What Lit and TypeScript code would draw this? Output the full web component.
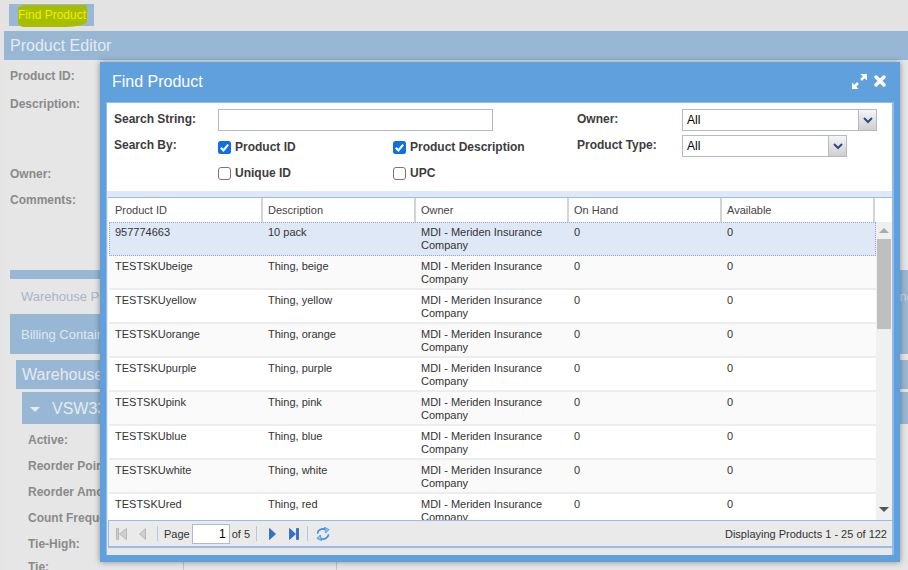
import { LitElement, html, css, svg } from "lit";
import { customElement } from "lit/decorators.js";

const rows = [
  ["957774663", "10 pack"],
  ["TESTSKUbeige", "Thing, beige"],
  ["TESTSKUyellow", "Thing, yellow"],
  ["TESTSKUorange", "Thing, orange"],
  ["TESTSKUpurple", "Thing, purple"],
  ["TESTSKUpink", "Thing, pink"],
  ["TESTSKUblue", "Thing, blue"],
  ["TESTSKUwhite", "Thing, white"],
  ["TESTSKUred", "Thing, red"],
];

const check = svg`<svg width="13" height="13" viewBox="0 0 13 13"><rect width="13" height="13" rx="2.5" fill="#0f6fe8"/><path d="M2.8 6.8 L5.4 9.4 L10.2 3.6" fill="none" stroke="#fff" stroke-width="2.2"/></svg>`;
const uncheck = svg`<svg width="13" height="13" viewBox="0 0 13 13"><rect x=".5" y=".5" width="12" height="12" rx="2.5" fill="#fff" stroke="#777"/></svg>`;
const arrow = svg`<svg width="10" height="7" viewBox="0 0 10 7"><path d="M1 1 L5 5 L9 1" fill="none" stroke="#2a4b86" stroke-width="2"/></svg>`;

@customElement("app-root")
export class AppRoot extends LitElement {
  static styles = css`
    :host { display: block; width: 908px; height: 570px; position: relative; overflow: hidden; background: #e4e4e4; font-family: "Liberation Sans", Arial, sans-serif; }
    .topbar { height: 31px; box-sizing: border-box; padding: 4px 0 0 9px; background: #e3e3e3; }
    .findbtn { position: relative; width: 85px; height: 22px; background: #9ab8d4; font-size: 12px; line-height: 22px; color: #eef000; box-sizing: border-box; padding-left: 9px; }
    .findbtn .hl { position: absolute; left: 9px; top: 1px; width: 69px; height: 22px; background: #a6bd00; border-radius: 8px 3px 22px 7px / 4px 2px 6px 4px; }
    .findbtn span { position: relative; }
    .page { margin-left: 4px; height: 539px; background: #e6e6e6; overflow: hidden; }
    .ph { height: 29px; background: #97b7d5; color: #e6ebf0; font-size: 16px; line-height: 29px; padding-left: 6px; }
    .form { height: 210px; padding: 9px 0 0 6px; box-sizing: border-box; display: flex; flex-direction: column; }
    .lab { font-size: 12px; font-weight: bold; color: #8a8a8a; line-height: 14px; }
    .form .l2 { margin-top: 14px; }
    .form .l3 { margin-top: 56px; }
    .form .l4 { margin-top: 12px; }
    .sec { margin-left: 6px; }
    .strip { height: 9px; background: #97b7d5; }
    .tabline { height: 35px; display: flex; line-height: 35px; font-size: 13px; color: #a9b5cc; padding-left: 11px; }
    .tabright { margin-left: auto; margin-right: -6px; width: 306px; background: #97b7d5; color: #c9d5e2; text-align: right; white-space: nowrap; }
    .billing { height: 40px; background: #97b7d5; color: #dfe7ef; font-size: 13px; line-height: 42px; padding-left: 11px; }
    .wh { margin: 6px 0 0 6px; height: 29px; background: #97b7d5; color: #e6ebf0; font-size: 16px; line-height: 29px; padding-left: 6px; }
    .vsw { margin: 3px 0 0 12px; height: 32px; background: #97b7d5; color: #e6ebf0; font-size: 16px; line-height: 33px; padding-left: 30px; position: relative; }
    .vsw::before { content: ""; position: absolute; left: 8px; top: 15px; border: 5px solid transparent; border-top: 5px solid #e6ebf0; border-bottom: 0; }
    .fields { margin-left: 18px; padding-top: 9px; display: flex; flex-direction: column; gap: 12px; }
    .fields .tie { margin-top: -3px; }
    .lines { position: absolute; left: 183px; top: 555px; width: 154px; height: 15px; box-sizing: border-box; border-left: 1px solid #c4c4c4; border-right: 1px solid #c4c4c4; }

    .modal { position: absolute; left: 100px; top: 62px; width: 800px; height: 500px; box-sizing: border-box; background: #5fa0dd; padding: 0 6px 7px; display: flex; flex-direction: column; box-shadow: 0 0 6px rgba(0,0,0,.4); }
    .mh { height: 40px; flex: none; display: flex; align-items: center; justify-content: space-between; padding: 0 0 0 6px; color: #fff; font-size: 16px; }
    .mh .icons { display: flex; align-items: center; gap: 7px; padding-right: 8px; margin-bottom: 2px; }
    .mb { flex: 1; min-height: 0; background: #e8e8e8; display: flex; flex-direction: column; border: 1px solid #8fbcec; border-width: 1px 2px 0 1px; }
    .search { height: 88px; flex: none; box-sizing: border-box; background: #fff; padding: 6px 0 0 7px; display: grid; grid-template-columns: 104px 175px 184px 105px 1fr; grid-template-rows: 22px 22px 22px; row-gap: 4px; align-items: start; }
    .search .lab { color: #3d3d3d; margin-top: 3px; }
    .field { position: relative; box-sizing: border-box; background: #fff; border: 1px solid #b5b8c8; height: 22px; font-size: 12px; line-height: 21px; padding-left: 4px; color: #000; }
    .wide { grid-column: 2 / span 2; width: 275px; }
    .f195 { width: 195px; }
    .f165 { width: 165px; }
    .trig { position: absolute; right: 0; top: 0; bottom: 0; width: 17px; background: linear-gradient(#f5f5f5, #cfcfcf); border-left: 1px solid #b5b8c8; display: flex; align-items: center; justify-content: center; }
    .cb { display: flex; align-items: center; gap: 4px; font-size: 12px; font-weight: bold; color: #3d3d3d; line-height: 14px; margin-top: 5px; }
    .cb svg { display: block; margin-top: 1px; }
    .r3 { grid-column: 2; }
    .gap { height: 6px; flex: none; background: #dfe8f6; }
    .grid { flex: 1; min-height: 0; margin-left: 1px; border: 1px solid #99bce8; border-width: 1px 0 0 0; padding-left: 1px; background: #fff; display: flex; flex-direction: column; overflow: hidden; }
    .ghead { height: 24px; flex: none; display: flex; background: #fff; }
    .ghead div { box-sizing: border-box; border-right: 2px solid #d4d4d4; font-size: 11px; line-height: 25px; padding-left: 5px; color: #444; }
    .ghead div:first-child { width: 154px; padding-left: 6px; }
    .cell { width: 153px; flex: none; }
    .gbody { flex: 1; min-height: 0; display: flex; }
    .grows { width: 767px; flex: none; overflow: hidden; background: #fff; }
    .row { height: 34px; box-sizing: border-box; display: flex; border-bottom: 2px solid #ededed; font-size: 11px; color: #333; line-height: 13px; background: #fff; }
    .row:nth-child(even) { background: #fafafa; }
    .row.sel { background: #dfe8f6; border-bottom: 0; outline: 1px dotted #8fa8d8; outline-offset: -1px; }
    .row > div { box-sizing: border-box; padding: 4px 6px 0; }
    .sbar { flex: 1; background: #f0f0f0; position: relative; display: flex; flex-direction: column; align-items: center; }
    .sup { margin-top: 6px; border: 5px solid transparent; border-top: 0; border-bottom: 5px solid #aaa; }
    .thumb { margin-top: 6px; width: 14px; height: 90px; background: #bfbfbf; }
    .sdown { position: absolute; bottom: 8px; border: 5px solid transparent; border-bottom: 0; border-top: 5px solid #555; }
    .pager { height: 28px; flex: none; box-sizing: border-box; margin: 0 0 7px 1px; border: 1px solid #99bce8; border-width: 1px 0 2px 1px; background: #eaeaea; display: flex; align-items: center; padding: 0 5px 0 7px; font-size: 11px; color: #333; }
    .pager svg { display: block; flex: none; }
    .pager span { padding-top: 1px; }
    .i2 { margin-left: 12px; }
    .i3 { margin-left: 12px; }
    .i4 { margin-left: 13px; }
    .sep { width: 1px; height: 15px; background: #a9cbef; flex: none; }
    .s1 { margin: 0 6px 0 11px; }
    .s2 { margin: 0 0 0 6px; }
    .s3 { margin: 0 8px 0 8px; }
    .pg { width: 38px; height: 20px; box-sizing: border-box; background: #fff; border: 1px solid #b5b8c8; text-align: right; line-height: 19px; padding-right: 3px; margin: 0 2px 0 2px; font-size: 12px; color: #000; }
    .disp { margin-left: auto; }
  `;

  render() {
    return html`
      <div class="topbar"><div class="findbtn"><div class="hl"></div><span>Find Product</span></div></div>
      <div class="page">
        <div class="ph">Product Editor</div>
        <div class="form">
          <div class="lab">Product ID:</div>
          <div class="lab l2">Description:</div>
          <div class="lab l3">Owner:</div>
          <div class="lab l4">Comments:</div>
        </div>
        <div class="sec">
          <div class="strip"></div>
          <div class="tabline"><span>Warehouse Properties</span><span class="tabright">Billing</span></div>
          <div class="billing">Billing Containers</div>
          <div class="wh">Warehouse</div>
          <div class="vsw">VSW33</div>
          <div class="fields">
            <div class="lab">Active:</div>
            <div class="lab">Reorder Point:</div>
            <div class="lab">Reorder Amount:</div>
            <div class="lab">Count Frequency:</div>
            <div class="lab">Tie-High:</div>
            <div class="lab tie">Tie:</div>
          </div>
        </div>
      </div>
      <div class="lines"></div>

      <div class="modal">
        <div class="mh">
          <span>Find Product</span>
          <div class="icons">
            <svg width="15" height="15" viewBox="0 0 15 15"><path d="M8.5 0H15V6.5L12.6 4.2 10 6.9 8.1 5 10.8 2.4zM0 15V8.5L2.4 10.8 5 8.1 6.9 10 4.2 12.6 6.5 15z" fill="#fff"/></svg>
            <svg width="12" height="12" viewBox="0 0 12 12"><path d="M2 2 L10 10 M10 2 L2 10" stroke="#fff" stroke-width="3.4" stroke-linecap="round"/></svg>
          </div>
        </div>
        <div class="mb">
          <div class="search">
            <div class="lab">Search String:</div>
            <div class="field wide"></div>
            <div class="lab">Owner:</div>
            <div class="field f195">All<div class="trig">${arrow}</div></div>

            <div class="lab">Search By:</div>
            <label class="cb">${check}Product ID</label>
            <label class="cb">${check}Product Description</label>
            <div class="lab">Product Type:</div>
            <div class="field f165">All<div class="trig">${arrow}</div></div>

            <label class="cb r3">${uncheck}Unique ID</label>
            <label class="cb">${uncheck}UPC</label>
          </div>
          <div class="gap"></div>
          <div class="grid">
            <div class="ghead">
              <div class="cell">Product ID</div><div class="cell">Description</div><div class="cell">Owner</div><div class="cell">On Hand</div><div class="cell">Available</div>
            </div>
            <div class="gbody">
              <div class="grows">
                ${rows.map((r, i) => html`
                  <div class="row ${i === 0 ? "sel" : ""}">
                    <div class="cell">${r[0]}</div><div class="cell">${r[1]}</div><div class="cell">MDI - Meriden Insurance Company</div><div class="cell">0</div><div class="cell">0</div>
                  </div>`)}
              </div>
              <div class="sbar"><div class="sup"></div><div class="thumb"></div><div class="sdown"></div></div>
            </div>
          </div>
          <div class="pager">
            <svg width="11" height="12" viewBox="0 0 11 12"><path d="M.5 .5h2v11h-2zM10.5 .5v11L3.5 6z" fill="#cfcfcf" stroke="#a8a8a8" stroke-width=".7"/></svg>
            <svg class="i2" width="7" height="12" viewBox="0 0 7 12"><path d="M6.5 .5v11L.5 6z" fill="#cfcfcf" stroke="#a8a8a8" stroke-width=".7"/></svg>
            <div class="sep s1"></div>
            <span>Page</span>
            <div class="pg">1</div>
            <span>of 5</span>
            <div class="sep s2"></div>
            <svg class="i3" width="7" height="12" viewBox="0 0 7 12"><path d="M.5 .5v11L6.5 6z" fill="#2f6fd0" stroke="#2a5aa8" stroke-width=".7"/></svg>
            <svg class="i4" width="10" height="12" viewBox="0 0 10 12"><path d="M.5 .5v11L6.5 6z" fill="#2f6fd0" stroke="#2a5aa8" stroke-width=".7"/><path d="M7.5 .5h2v11h-2z" fill="#2f6fd0" stroke="#2a5aa8" stroke-width=".7"/></svg>
            <div class="sep s3"></div>
            <svg width="14" height="14" viewBox="0 0 15 15" fill="none"><path d="M1.5 7C2 3 6.5.9 10.5 2.8" stroke="#3b8ae0" stroke-width="1.7"/><path d="M9 .3 14 2.8 10.4 6.4z" fill="#8fc4f2" stroke="#3b8ae0" stroke-width=".8"/><path d="M13.5 8C13 12 8.5 14.1 4.5 12.2" stroke="#3b8ae0" stroke-width="1.7"/><path d="M6 14.7 1 12.2 4.6 8.6z" fill="#8fc4f2" stroke="#3b8ae0" stroke-width=".8"/></svg>
            <span class="disp">Displaying Products 1 - 25 of 122</span>
          </div>
        </div>
      </div>
    `;
  }
}
